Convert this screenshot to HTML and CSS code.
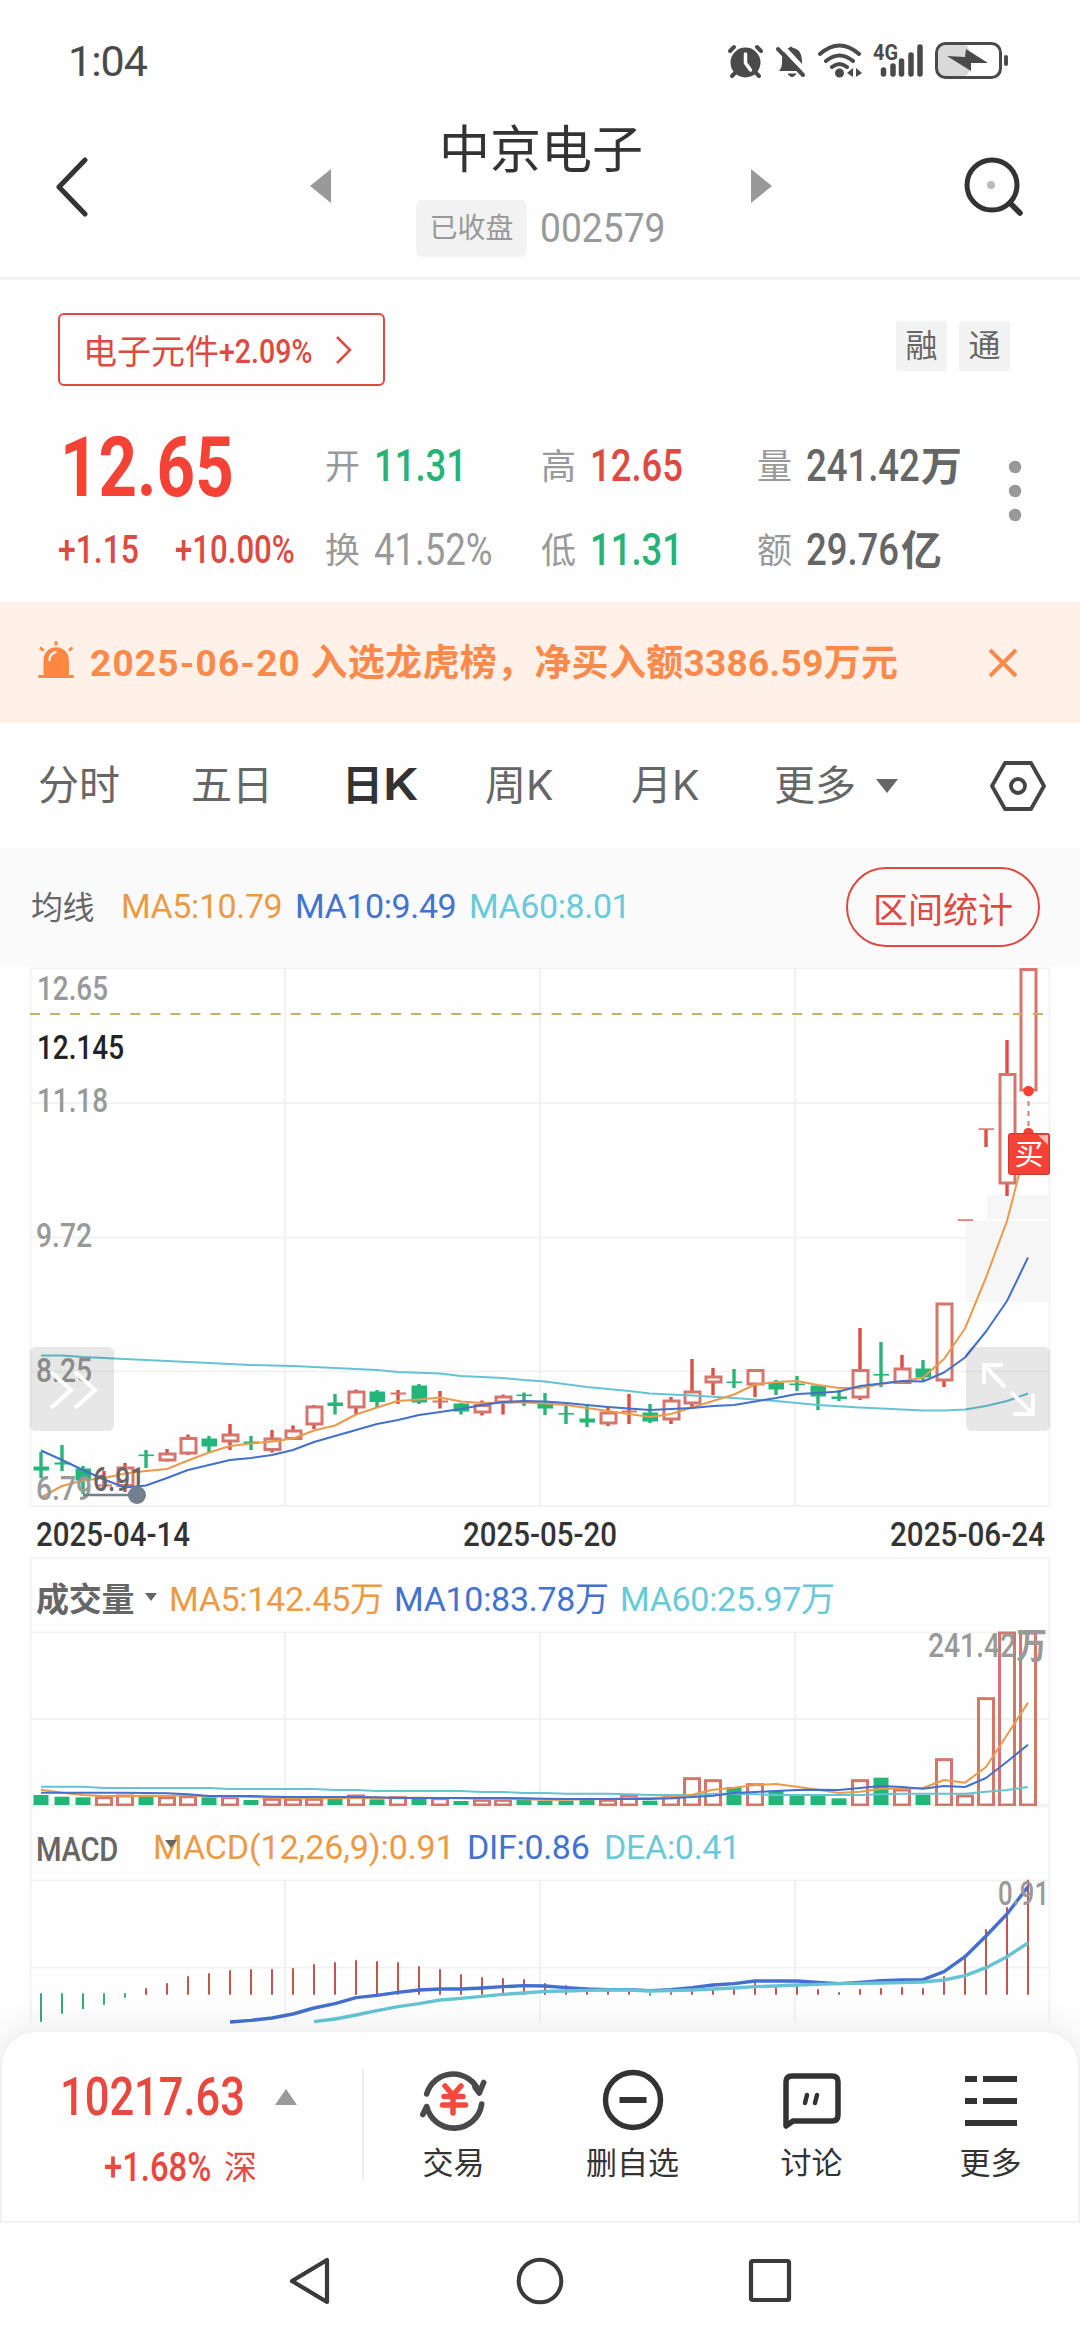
FILE: index.html
```html
<!DOCTYPE html>
<html lang="zh-CN">
<head>
<meta charset="utf-8">
<title>中京电子 002579</title>
<link rel="stylesheet" href="styles.css">
</head>
<body>
<div class="screen">
  <div class="status">
    <span class="clock">1:04</span>
    <svg class="status-icons" width="290" height="44" viewBox="722 38 290 44" fill="#4a4a4a">
      <g stroke="#4a4a4a" stroke-linecap="round" fill="none">
        <path d="M730 50l4-4M761 50l-4-4" stroke-width="4"/>
        <path d="M736 71l-4 4M755 71l4 4" stroke-width="4"/>
        <circle cx="745.500" cy="61.500" r="15" fill="#4a4a4a" stroke="none"/>
        <path d="M745.500 53v9l5 7" stroke="#fff" stroke-width="3.500"/>
      </g>
      <path d="M779 70q3-3 3-9c0-9 2-13 7-14q2-3 4 0c7 1 9 7 9 14q0 6 4 9z"/>
      <path d="M788 73h8q-4 5-8 0z" stroke="#4a4a4a"/>
      <path d="M781 44l26 28" stroke="#fefefe" stroke-width="5"/>
      <path d="M778 48l25 26" stroke="#4a4a4a" stroke-width="4" stroke-linecap="round"/>
      <g fill="none" stroke="#4a4a4a" stroke-width="4" stroke-linecap="round">
        <path d="M820 53q19.500-17 39 0M826 60q13.500-11 27 0M832 66q7.500-6 15 0"/>
      </g>
      <circle cx="839.500" cy="72" r="4.500"/>
      <path d="M853 67v9l-6-4zM856 67v9l6-4z"/>
      <text x="873" y="59" class="net" textLength="25" lengthAdjust="spacingAndGlyphs">4G</text>
      <g stroke="#4a4a4a" stroke-width="5.500" stroke-linecap="round">
        <path d="M883.500 69v4M893 65v8M901.500 60v13M911 54v19M920 46v27"/>
      </g>
      <rect x="938" y="44" width="31" height="31" rx="5" fill="#d9d9d9"/>
      <rect x="936.500" y="42.500" width="64" height="34" rx="9" fill="none" stroke="#4a4a4a" stroke-width="3"/>
      <path d="M947 55l18 1 1-8 22 14-17 0v8z"/>
      <rect x="1004" y="54" width="4" height="11" rx="2"/>
    </svg>
  </div>

  <header class="header">
    <svg width="36" height="60" viewBox="0 0 36 60"><path d="M31 3L5 30l26 27" fill="none" stroke="#333" stroke-width="5" stroke-linecap="round" stroke-linejoin="round"/></svg>
    <svg class="prev" width="22" height="36" viewBox="0 0 22 36"><path d="M21 1v34L0 18z" fill="#999"/></svg>
    <div class="stock">
      <h1>中京电子</h1>
      <div class="stock-sub"><span class="closed">已收盘</span><span class="code">002579</span></div>
    </div>
    <svg class="next" width="22" height="36" viewBox="0 0 22 36"><path d="M1 1v34l21-17z" fill="#999"/></svg>
    <svg class="search" width="62" height="62" viewBox="0 0 62 62"><circle cx="29" cy="29" r="25" fill="none" stroke="#333" stroke-width="5"/><path d="M47 47l10 10" stroke="#333" stroke-width="5.500" stroke-linecap="round"/><circle cx="28" cy="29" r="4" fill="#bbb"/></svg>
  </header>

  <section class="quote">
    <div class="tags">
      <a class="sector"><span class="sector-name">电子元件</span><span class="sector-chg din">+2.09%</span><svg width="18" height="30" viewBox="0 0 18 30"><path d="M2 2l13 13L2 28" fill="none" stroke="#dc4a41" stroke-width="2.500"/></svg></a>
      <div class="marks"><span>融</span><span>通</span></div>
    </div>
    <div class="figures">
      <div class="price din">12.65</div>
      <dl><dt>开</dt><dd class="down"><span class="din">11.31</span></dd></dl>
      <dl><dt>高</dt><dd class="up"><span class="din">12.65</span></dd></dl>
      <dl><dt>量</dt><dd><span class="din vol">241.42</span><b>万</b></dd></dl>
      <svg class="dots" width="14" height="62" viewBox="0 0 14 62" fill="#999"><circle cx="7" cy="7" r="6.200"/><circle cx="7" cy="31" r="6.200"/><circle cx="7" cy="55" r="6.200"/></svg>
      <div class="change"><span class="din">+1.15</span><span class="din">+10.00%</span></div>
      <dl><dt>换</dt><dd class="flat"><span class="din">41.52%</span></dd></dl>
      <dl><dt>低</dt><dd class="down"><span class="din">11.31</span></dd></dl>
      <dl><dt>额</dt><dd><span class="din amount">29.76</span><b>亿</b></dd></dl>
    </div>
  </section>

  <section class="notice">
    <svg width="40" height="46" viewBox="0 -2 40 46"><path d="M7.500 34V18a12.700 12.700 0 0 1 25.400 0v16z" fill="#ff8740"/><path d="M2.300 34.500h35.400M20-.8v4.300M4 5.500l3.500 3M36.500 5.500l-3.500 3" stroke="#ff8740" stroke-width="2.800"/><path d="M13.500 18q0-6 6-8" fill="none" stroke="#fff0e8" stroke-width="2.500" stroke-linecap="round"/></svg>
    <p><span>2025-06-20</span> 入选龙虎榜，净买入额3386.59万元</p>
    <svg class="close" width="30" height="30" viewBox="0 0 30 30"><path d="M2 2l26 26M28 2L2 28" stroke="#f98a4b" stroke-width="4"/></svg>
  </section>

  <nav class="tabs">
    <span class="t1">分时</span><span class="t2">五日</span><span class="t3">日<b>K</b></span><span class="t4">周K</span><span class="t5">月K</span><span class="t6">更多<i class="caret"></i></span>
    <svg width="56" height="50" viewBox="0 0 56 50" fill="none" stroke="#444" stroke-width="3.800" stroke-linejoin="round"><path d="M15 2h26l13 23-13 23H15L2 25z"/><circle cx="28" cy="25" r="7"/></svg>
  </nav>

  <section class="average">
    <span class="label">均线</span>
    <span class="c5">MA5:10.79</span><span class="c10">MA10:9.49</span><span class="c60">MA60:8.01</span>
    <button class="range">区间统计</button>
  </section>

  <svg id="price" class="chart" width="1080" height="591" viewBox="0 966 1080 591">
    <g class="grid"><path d="M30 968.500h1020M30 1103h1020M30 1237.500h1020M30 1371.500h1020M30 1506h1020M30.500 968v538M285 968v538M540 968v538M795 968v538M1049.500 968v538"/></g>
    <g fill="#f6f6f6"><rect x="987" y="1195" width="63" height="24"/><rect x="966" y="1221" width="84" height="81"/></g>
    <g class="plot"></g>
    <path d="M30 1014H1050" stroke="#c9ae6c" stroke-width="2.200" stroke-dasharray="10 10.060"/>
    <g class="axis">
      <text x="37" y="1000" textLength="71" lengthAdjust="spacingAndGlyphs">12.65</text>
      <text x="37" y="1059" textLength="87" lengthAdjust="spacingAndGlyphs" fill="#222">12.145</text>
      <text x="37" y="1112" textLength="71" lengthAdjust="spacingAndGlyphs">11.18</text>
      <text x="36" y="1247" textLength="56" lengthAdjust="spacingAndGlyphs">9.72</text>
      <text x="36" y="1382" textLength="56" lengthAdjust="spacingAndGlyphs">8.25</text>
      <text x="36" y="1500" textLength="56" lengthAdjust="spacingAndGlyphs">6.79</text>
      <text x="93" y="1491" textLength="52" lengthAdjust="spacingAndGlyphs" fill="#666">6.91</text>
    </g>
    <path d="M83 1495h54" stroke="#71808f" stroke-width="2.500"/><circle cx="137" cy="1495" r="9" fill="#71808f"/>
    <path d="M1028.500 1091v42" stroke="#df7a70" stroke-width="2" stroke-dasharray="5 5"/>
    <g fill="#f44336"><circle cx="1028.500" cy="1091" r="5.200"/><circle cx="1028.500" cy="1133" r="5.200"/><rect x="1008.500" y="1133.500" width="41" height="41" rx="2" stroke="#c43c34"/></g>
    <path d="M1038 1135h10v10z" fill="#fbb9b3"/>
    <text x="1029" y="1165" class="buy" text-anchor="middle">买</text>
    <g fill="#000" fill-opacity=".09"><rect x="30" y="1347" width="84" height="84" rx="6"/><rect x="966" y="1347" width="84" height="84" rx="6"/></g>
    <g fill="none" stroke="#fff" stroke-width="4">
      <path d="M51 1372l20 18-20 18M75 1372l20 18-20 18"/>
      <path d="M1003 1365h-19v19M984 1365l21 22M1011 1392l22 22M1033 1394v20h-20"/>
    </g>
    <g class="dates">
      <text x="36" y="1546" textLength="154" lengthAdjust="spacingAndGlyphs">2025-04-14</text>
      <text x="463" y="1546" textLength="154" lengthAdjust="spacingAndGlyphs">2025-05-20</text>
      <text x="890" y="1546" textLength="155" lengthAdjust="spacingAndGlyphs">2025-06-24</text>
    </g>
  </svg>

  <div class="indicator volume-head">
    <b>成交量</b><i class="caret"></i>
    <span class="c5">MA5:142.45万</span><span class="c10">MA10:83.78万</span><span class="c60">MA60:25.97万</span>
  </div>
  <svg id="volume" class="chart" width="1080" height="174" viewBox="0 1632 1080 174">
    <g class="grid"><path d="M30 1632.500h1020M30 1719h1020M30 1805h1020M30.500 1632v174M285 1632v174M540 1632v174M795 1632v174M1049.500 1632v174"/></g>
    <g class="plot"></g>
    <g class="axis"><text x="928" y="1657" textLength="119" lengthAdjust="spacingAndGlyphs">241.42<tspan class="unit" dy="1.500">万</tspan></text></g>
  </svg>

  <div class="indicator macd-head">
    <b class="din">MACD</b>
    <span class="c5">MACD(12,26,9):0.91<i class="caret"></i></span><span class="c10">DIF:0.86</span><span class="c60">DEA:0.41</span>
  </div>
  <svg id="macd" class="chart" width="1080" height="142" viewBox="0 1880 1080 142">
    <g class="grid"><path d="M30 1880.500h1020M30 1967.500h1020M30.500 1880v142M285 1880v142M540 1880v142M795 1880v142M1049.500 1880v142"/></g>
    <g class="plot"></g>
    <g class="axis"><text x="998" y="1905" textLength="51" lengthAdjust="spacingAndGlyphs">0.91</text></g>
  </svg>

  <footer class="dock">
    <div class="index">
      <div class="index-row"><span class="index-val din">10217.63</span><svg width="22" height="16" viewBox="0 0 22 16"><path d="M11 0l11 16H0z" fill="#999"/></svg></div>
      <div class="index-sub"><span class="din">+1.68%</span><em>深</em></div>
    </div>
    <div class="actions">
      <a><svg width="68" height="62" viewBox="0 0 68 62" fill="none" stroke="#4a4a4a" stroke-width="5.600" stroke-linecap="round" stroke-linejoin="round"><path d="M6.700 25A27.500 27.500 0 0 1 59.300 24l4.400-10.500M59.300 24L55 18M61.700 35A28 28 0 0 1 6.700 37.500L2.800 45.500"/><path d="M25 17l8 9 8-9M24 27.500h19M22.500 36h23M33 27v17" stroke="#f4493c" stroke-width="5.500"/></svg><span>交易</span></a>
      <a><svg width="62" height="62" viewBox="0 0 62 62" fill="none" stroke="#333" stroke-width="5.400"><circle cx="31" cy="31" r="27.500"/><path d="M17.500 31h27" stroke-width="6"/></svg><span>删自选</span></a>
      <a><svg width="62" height="62" viewBox="0 0 62 62" fill="none" stroke="#333" stroke-width="5.500" stroke-linejoin="round"><path d="M5 57V13q0-6 6-6h40q6 0 6 6v33q0 6-6 6H12z"/><path d="M26 26l-2 8M36 26l-2 8" stroke-width="4.500" stroke-linecap="round"/></svg><span>讨论</span></a>
      <a><svg width="62" height="62" viewBox="0 0 62 62" fill="none" stroke="#333" stroke-width="6"><path d="M5 10h12M23 10h34M5 32h12M23 32h34M5 54h52"/></svg><span>更多</span></a>
    </div>
  </footer>

  <div class="sysnav">
    <svg width="44" height="48" viewBox="0 0 44 48"><path d="M39 3v42L4 24z" fill="none" stroke="#3a3a3a" stroke-width="4.200" stroke-linejoin="round"/></svg>
    <svg width="48" height="48" viewBox="0 0 48 48"><circle cx="24" cy="24" r="21.300" fill="none" stroke="#3a3a3a" stroke-width="4"/></svg>
    <svg width="44" height="46" viewBox="0 0 44 46"><rect x="3" y="3" width="38" height="39" rx="1.500" fill="none" stroke="#3a3a3a" stroke-width="4.200"/></svg>
  </div>
</div>
<script src="charts.js"></script>
</body>
</html>
```
FILE: styles.css
```css
* { box-sizing: border-box; margin: 0; padding: 0; }
body {
  width: 1080px;
  background: #fefefe;
  color: #333;
  font-family: Roboto, "Noto Sans CJK SC", sans-serif;
}
svg { display: block; flex: none; }
i, em { font-style: normal; }
.screen { width: 1080px; height: 2340px; overflow: hidden; display: flex; flex-direction: column; }
.screen > * { flex: none; }

/* Condensed figures, narrowed from the left edge */
.din { display: block; transform: scaleX(.82); transform-origin: 0 50%; white-space: nowrap; }

.status { height: 122px; padding: 0 68px 0 68px; display: flex; justify-content: space-between; align-items: center; }
.clock { font-size: 43px; color: #4a4a4a; letter-spacing: -1px; }
.net { font: bold 22px Roboto, sans-serif; }

.header { height: 158px; border-bottom: 3px solid #f2f2f2; display: flex; padding-left: 54px; }
.header > svg { margin-top: 35px; }
.header .prev { margin: 46px 0 0 220px; }
.stock { width: 418px; text-align: center; }
.stock h1 { font-size: 51px; font-weight: 400; line-height: 58px; }
.stock-sub { display: flex; align-items: center; gap: 13px; padding-left: 84px; margin-top: 20px; }
.closed { width: 111px; height: 57px; line-height: 57px; font-size: 28px; color: #999; background: #f2f2f2; border-radius: 6px; }
.code { font-size: 40px; color: #999; transform: scaleX(.93); transform-origin: 0 50%; }
.header .next { margin: 46px 0 0; }
.header .search { margin: 34px 0 0 191px; }

.quote { height: 322px; padding: 33px 0 0 58px; }
.tags { display: flex; justify-content: space-between; height: 111px; padding-right: 70px; }
.sector { width: 327px; height: 73px; border: 2px solid #dc4a41; border-radius: 6px; display: flex; align-items: center; padding-left: 23px; color: #dc4a41; font-size: 34px; }
.sector-chg { width: 116px; font-weight: 500; font-size: 34px; line-height: 40px; padding-top: 3px; transform: scaleX(.84); }
.marks { display: flex; gap: 12px; padding-top: 8px; }
.marks span { width: 51px; height: 50px; line-height: 51px; text-align: center; font-size: 32px; color: #666; background: #f2f2f2; border-radius: 3px; }
.figures { display: grid; grid-template: 84px 84px / 267px 216px 216px 251px 14px; align-items: center; }
.price { font-size: 84px; font-weight: 700; color: #f44336; line-height: 84px; padding-top: 4px; transform: scaleX(.8); margin-left: 2px; }
.figures dl { display: flex; align-items: center; gap: 14px; line-height: 84px; }
.figures dt { font-family: "Noto Sans CJK SC", sans-serif; font-size: 35px; color: #999; margin-top: -4px; }
.figures dd { font-size: 44.5px; font-weight: 500; color: #666; display: flex; }
.figures dd b { font-family: "Noto Sans CJK SC", sans-serif; font-size: 41px; line-height: 78px; }
.figures dd.up { color: #dc4a41; }
.figures dd.down { color: #27b276; }
.figures dd.flat { color: #999; font-weight: 400; }
.vol { width: 115px; }
.amount { width: 95px; }
.change { display: flex; font-size: 38px; font-weight: 500; color: #dc4a41; }
.change .din { width: 117px; }
.change span:first-child { transform: scaleX(.84); }
.dots { grid-row: 1; grid-column: 5; align-self: center; margin-top: 50px; }

.notice { height: 121px; background: #fff0e8; display: flex; align-items: center; padding-left: 36px; color: #fa8a4b; }
.notice p { width: 912px; padding: 0 0 5px 14px; font-size: 37px; letter-spacing: .3px; font-weight: 700; white-space: nowrap; }
.notice p span { letter-spacing: 1.2px; }

.tabs { height: 125px; display: flex; align-items: center; padding: 0 34px 0 38px; font: 41px/1.2 Inter, "Noto Sans CJK SC", sans-serif; color: #666; }
.tabs span { margin-top: 0; }
.tabs .t1 { width: 153px; }
.tabs .t2 { width: 151px; }
.tabs .t3 { width: 143px; color: #333; font-weight: 700; }
.tabs .t3 b { display: inline-block; font-weight: 600; font-size: 44px; line-height: 40px; transform: scaleX(1.15); transform-origin: 0 50%; }
.tabs .t4 { width: 146px; }
.tabs .t5 { width: 143px; }
.tabs .t6 { width: 216px; display: flex; align-items: center; }
.caret { display: block; border: solid transparent; border-top-color: #666; border-width: 8px 6px 0; }
.t6 .caret { border-width: 14px 11px 0; margin: 0 0 0 20px; }

.c5 { color: #eb9a45; }
.c10 { color: #4473cf; }
.c60 { color: #68cad8; }
.average { height: 118px; background: #fafafa; display: flex; align-items: center; padding: 0 40px 0 31px; font-size: 34px; letter-spacing: -.4px; }
.average span { margin-top: -2px; }
.average .label { width: 90px; font-size: 32px; color: #666; margin-top: -4px; }
.average .c5, .average .c10 { width: 174px; }
.average .c60 { width: 377px; }
.range { width: 194px; height: 80px; border: 2px solid #dc4a41; border-radius: 40px; background: none; color: #dc4a41; font: 35px "Noto Sans CJK SC", sans-serif; }

.chart { overflow: visible; }
.grid path { fill: none; stroke: #f2f2f2; stroke-width: 2; }
.axis { font: 500 33px Roboto, sans-serif; fill: #999; }
.unit { font: bold 36px "Noto Sans CJK SC", sans-serif; }
.dates { font: 500 33px Roboto, sans-serif; fill: #333; }
.buy { font: 29px "Noto Sans CJK SC", sans-serif; fill: #fff; }
.rise { fill: none; stroke: #d6756c; stroke-width: 3; }
.wick-up { stroke: #db4f44; stroke-width: 3.4; }
.fall { fill: #23b678; }
.wick-down { stroke: #2cb377; stroke-width: 3.4; }
.line { fill: none; stroke-width: 2; stroke-linejoin: round; }
.thick { stroke-width: 3.4; }

.indicator { height: 75px; margin: 0 30px; border: 2px solid #f5f5f5; border-bottom: 0; display: flex; align-items: center; font-size: 34px; letter-spacing: -.3px; padding-top: 2px; }
.indicator b { font-size: 33px; color: #666; }
.volume-head b { width: 113px; font-weight: 700; padding-left: 4px; }
.volume-head .c5 { margin-left: 12px; width: 225px; }
.volume-head .c10 { width: 226px; }
.macd-head { height: 74px; padding-top: 6px; }
.macd-head b { width: 117px; margin: 4px 0 0 4px; font-weight: 500; font-size: 34px; transform: scaleX(.86); }
.macd-head .c5 { width: 314px; position: relative; letter-spacing: -.1px; }
.macd-head .caret { position: absolute; left: 12px; top: 13px; }
.macd-head .c10 { width: 137px; }

.dock { height: 193px; margin-top: 8px; border: 2px solid #f2f2f2; border-radius: 36px 36px 0 0; background: #fefefe; box-shadow: 0 0 36px rgba(0, 0, 0, .09); position: relative; display: flex; padding-top: 37px; }
.index { flex: none; width: 362px; height: 112px; border-right: 2px solid #eee; color: #e8483e; padding-left: 58px; }
.index-row { display: flex; align-items: center; height: 56px; }
.index-val { width: 215px; font-size: 53px; font-weight: 500; }
.index-sub { display: flex; align-items: center; height: 56px; padding-left: 44px; margin-top: 14px; font-size: 40px; font-weight: 500; }
.index-sub .din { width: 120px; }
.index-sub em { font: 33px "Noto Sans CJK SC", sans-serif; margin-top: -4px; }
.actions { display: flex; flex: none; }
.actions a { width: 179px; display: flex; flex-direction: column; align-items: center; font-size: 31px; line-height: 65px; color: #333; }
.sysnav { height: 116px; display: flex; align-items: center; justify-content: center; gap: 184px; position: relative; background: #fefefe; }
```
FILE: charts.js
```js
const SVG = 'http://www.w3.org/2000/svg';
const xAt = i => 41 + i * 21;

function add(parent, name, attrs) {
  const el = document.createElementNS(SVG, name);
  for (const key in attrs) el.setAttribute(key, attrs[key]);
  parent.appendChild(el);
}

// Each series is a list of y values; null entries are bridged by the line.
function line(parent, color, ys, start = 0, extra = '') {
  const d = ys.map((y, n) => y === null ? '' : `${xAt(start + n)} ${y}`).filter(Boolean);
  add(parent, 'path', { class: 'line ' + extra, stroke: color, d: 'M' + d.join('L') });
}

const ORANGE = '#e99a4b', BLUE = '#4370cc', CYAN = '#66c3d3';

// direction, high, body top, body bottom, low
const candles = [
  ['G',1452,1467,1470,1478],['G',1445,1463,1464,1471],['G',1466,1469,1480,1494],['R',1471,1485,1486,1487],
  ['R',1463,1468,1485.5,1492],['G',1450,1455,1455.5,1468],['R',1449,1454,1460,1461.5],['R',1434.5,1438.5,1453,1455],
  ['G',1436,1439,1446,1452],['R',1424,1435,1441,1450],['G',1436,1442,1443,1450],['R',1430,1439,1449.5,1452.5],
  ['R',1425.5,1431,1438.5,1440],['R',1405,1407,1424,1429],['G',1394,1403,1405.5,1414.5],['R',1389.5,1392,1407,1414],
  ['G',1390,1392,1401.5,1407],['R',1390,1393,1394,1404],['G',1384,1386,1402,1404],['R',1391,1401,1402,1408.5],
  ['G',1403,1404,1411,1414.5],['R',1400.5,1405.5,1412,1415.5],['R',1394.5,1397,1402,1414.5],['G',1392.5,1395,1395.5,1406],
  ['G',1393,1403,1408,1415],['G',1406,1413.5,1414,1424],['G',1406,1419,1422,1427],['R',1406,1413,1423,1426],
  ['R',1394,1411,1412,1424],['G',1404,1413,1421,1423],['R',1397,1401,1419,1424],['R',1359,1392,1403,1409],
  ['R',1368,1377,1382,1395],['G',1369,1382,1382.5,1388],['R',1369,1370.5,1384,1397],['G',1380,1383,1389,1395],
  ['G',1376,1384,1384.5,1391],['G',1385,1386,1396,1410],['G',1390,1397,1398.5,1401],['R',1328,1370.5,1397,1400],
  ['G',1342,1374.5,1375,1387],['R',1355,1369,1382.5,1384],['G',1360,1369,1377,1382],['R',1303,1304,1380,1387],
  ['R',1220,1219.8,1220.2,1220],['R',1129,1128.8,1129.2,1147],['R',1040,1074.5,1183,1196],['R',969,969.500,1090,1090]
];
const price = document.querySelector('#price .plot');
candles.forEach(([dir, high, top, bottom, low], i) => {
  const x = xAt(i), up = dir === 'R', h = bottom - top;
  const wick = up ? 'wick-up' : 'wick-down';
  if (h > 4 && up) {
    add(price, 'path', { class: wick, d: `M${x} ${high}V${top}M${x} ${bottom}V${low}` });
    add(price, 'rect', { class: 'rise', x: x - 7, y: top, width: 15, height: h });
  } else {
    add(price, 'path', { class: wick, d: `M${x} ${high}V${low}` });
    add(price, 'rect', { fill: up ? '#d6756c' : '#23b678', x: x - 7.5, y: top - .5, width: 15.5, height: Math.max(1.6, h + 1) });
  }
});
line(price, CYAN, [1355.5,1355.5,1357,1358,1359,null,1361,null,1363,null,1365,null,1366,null,1368,null,1370,1372,null,1373.5,1376,null,1378,1380,1381.5,null,1387,null,1391,1393.5,null,1395.5,null,1398,null,1401,null,1405,null,1407.5,null,null,1410.5,1410.5,1409.5,1406,1401,1393.5]);
line(price, ORANGE, [1497.5,1486,1480.5,1478,1473.5,1471,1469,1460.5,1452.5,1446,1443.5,1441.5,1438.5,1430.5,1425.5,1414.5,1407.5,1401,1399.5,1397.5,1401.5,1403,1402.5,1402.5,1403.5,1405,1408,1411,1414,1417,1414,1407.5,1401,1394.5,1384.5,1382,1381,1385,1388,1388,1384,1381.5,1377.5,1359,1328.5,1277.5,1221,1140]);
line(price, BLUE, [1450.5,1460,1470,1479.5,1487.5,1485.5,1478,1470,1465,1460,1458,1455,1450,1442,1436,1430,1424,1420,1415,1412,1409,1405,1402,1401,1401.5,1403,1405,1407,1408.5,1410,1409,1408,1406,1405,1401.5,1398,1394,1393,1391.5,1386,1383.5,1381,1381.5,1372.5,1357.5,1331.5,1301,1257.5]);

// Panels below the price share a scale of three units per pixel.
const y3 = v => 1550 + v / 3;
const scale = list => list.map(v => v === null ? null : y3(v));

const volume = document.querySelector('#volume .plot');
[735,740,742,743,738,740,743,740,742,743,750,748,748,748,743,738,748,743,743,746,753,751,751,750,752,752,748,751,738,752,743,686,692,711,704,722,736,736,745,692,683,720,735,629,738,446,249,249].forEach((v, i) => {
  const x = xAt(i);
  if (candles[i][0] === 'R') add(volume, 'rect', { class: 'rise', x: x - 7.5, y: y3(v), width: 15, height: (765 - v) / 3 });
  else add(volume, 'rect', { class: 'fall', x: x - 7.5, y: y3(v), width: 15, height: (765 - v) / 3 });
});
line(volume, CYAN, scale([710,710,710,714,714,714,714,714,714,717,717,717,717,717,720,720,723,723,723,723,723,726,726,729,729,731,731,731,733,735,735,735,731,731,733,735,735,735,735,735,733,731,731,731,731,725,720,711]));
line(volume, ORANGE, scale([719,728,735,738,738,737,738,735,740,739,741,743,745,745,745,744,743,744,743,744,745,747,747,748,749,749,748,747,745,744,742,734,719,713,705,702,710,719,729,725,716,716,714,690,698,651,555,458]));
line(volume, BLUE, scale([728,728,728,728,728,729,730,733,738,738,738,740,741,741,741,741,742,744,744,744,744,744,744,745,746,747,747,747,747,747,745,741,737,729,726,723,720,719,720,714,708,711,716,708,711,684,635,584]));

const macd = document.querySelector('#macd .plot');
[1415,1391,1377,1364,1343,1315,1300,1279,1270,1261,1258,1258,1255,1243,1237,1231,1234,1237,1249,1258,1273,1282,1285,1288,1300,1306,1312,1322,1325,1337,1327,1322,1318,1312,1297,1306,1308,1318,1327,1318,1315,1312,1315,1279,1225,1138,1072,989].forEach((v, i) => {
  const down = v > 1333 || i < 5;
  add(macd, 'path', { stroke: down ? '#3aa877' : '#bf574f', 'stroke-width': 2, d: `M${xAt(i)} ${y3(down ? 1330 : 1334)}V${y3(v)}` });
});
line(macd, BLUE, scale([1416,1411,1404,1392,1374,1361,1343,1336,1327,1320,1317,1317,1314,1310,1307,1308,1313,1317,1319,1319,1322,1319,1313,1305,1301,1293,1293,1293,1297,1301,1297,1292,1290,1289,1265,1220,1158,1092,1010]), 9, 'thick');
line(macd, CYAN, scale([1415,1407,1395,1382,1370,1361,1350,1345,1339,1333,1329,1324,1323,1321,1320,1320,1323,1322,1320,1317,1314,1310,1308,1305,1303,1301,1300,1299,1298,1296,1290,1277,1253,1220,1179]), 13, 'thick');
```
